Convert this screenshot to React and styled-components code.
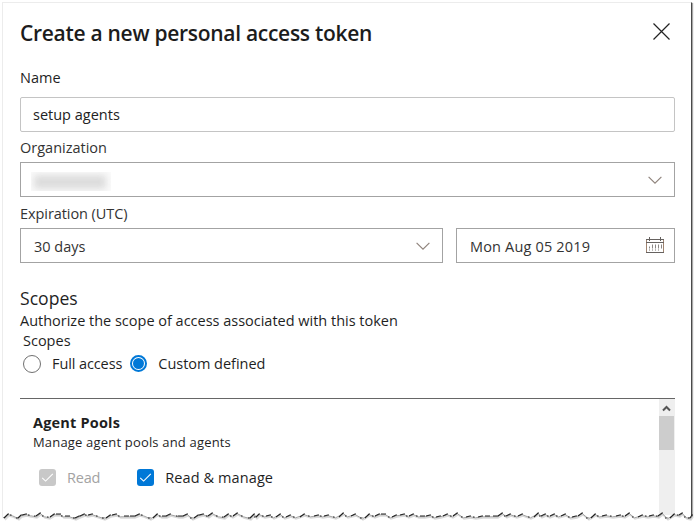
import React from 'react';
import styled, { createGlobalStyle } from 'styled-components';

const GlobalStyle = createGlobalStyle`
  * { box-sizing: border-box; }
  body {
    margin: 0;
    background: #fff;
    overflow: hidden;
    color: #1f1f1f;
    font: 14.5px "Open Sans", "Noto Sans", sans-serif;
  }
`;

const Page = styled.main`
  display: flex;
  height: 528px;
  padding: 2px 3px 11px 2px;
`;

const Panel = styled.section`
  position: relative;
  display: flex;
  flex-direction: column;
  width: 690px;
  padding: 0 16px 0 17px;
  border: solid #ececec;
  border-width: 1px 0 0 1px;
  border-right: 1px solid #4a4a4a;
  box-shadow: 1px 1px 1px #a8a8a8;
`;

const Header = styled.header`
  display: flex;
  justify-content: space-between;
  align-items: center;
  height: 61px;
  padding: 0 5px 1px 0;
`;

const Title = styled.h1`
  margin: 0;
  font-size: 21px;
  font-weight: 600;
  letter-spacing: -0.29px;
  line-height: 28px;
  color: #1c1c1c;
`;

const CloseButton = styled.button`
  display: flex;
  padding: 0 0 4px;
  border: 0;
  background: none;
`;

const Label = styled.label`
  height: ${(p) => p.$height}px;
  line-height: ${(p) => p.$line || 28}px;
  letter-spacing: ${(p) => p.$spacing || 0}px;
  color: ${(p) => p.$color || '#333'};
`;

const TextInput = styled.input`
  height: 35px;
  padding: 0 12px;
  border: 1px solid #c4c4c4;
  border-radius: 2px;
  font: inherit;
  color: #222;
  outline: none;
`;

const FieldRow = styled.div`
  display: grid;
  grid-template-columns: 423px 219px;
  gap: 13px;
`;

const PickerBox = styled.div`
  display: flex;
  justify-content: space-between;
  align-items: center;
  height: 35px;
  padding: 0 ${(p) => p.$right || 12}px 0 13px;
  border: 1px solid #a3a3a3;
  color: #333;
  letter-spacing: ${(p) => p.$spacing || 0}px;
`;

const PickerValue = styled.span`
  padding-top: 2px;
`;

const RedactedName = styled.span`
  display: flex;
  width: 80px;
  height: 19px;
  margin: 3px 0 0 -3px;
  padding: 3px 5px 2px 3px;
  overflow: hidden;
  background: #fbfbfb;

  &::before {
    content: '';
    flex: 1;
    background: #dcdcdc;
    filter: blur(3.5px);
  }
`;

const SectionTitle = styled.h2`
  margin: 23px 0 0;
  height: 24px;
  line-height: 24px;
  font-size: 17.6px;
  font-weight: 400;
`;

const Description = styled.p`
  margin: 0;
  height: 21px;
  line-height: 21px;
  letter-spacing: -0.01px;
`;

const Legend = styled.div`
  height: 20px;
  padding-left: 3px;
  line-height: 20px;
`;

const Choices = styled.div`
  display: flex;
  align-items: center;
  gap: ${(p) => p.$gap}px;
  height: ${(p) => p.$height}px;
  padding-left: ${(p) => p.$indent}px;
`;

const Choice = styled.label`
  display: flex;
  align-items: center;
  gap: ${(p) => p.$gap}px;
  letter-spacing: ${(p) => p.$spacing || 0}px;
  color: ${(p) => (p.$disabled ? '#a3a3a3' : 'inherit')};
`;

const Radio = styled.span`
  display: flex;
  align-items: center;
  justify-content: center;
  width: ${(p) => (p.$checked ? 17 : 18)}px;
  height: ${(p) => (p.$checked ? 17 : 18)}px;
  border: ${(p) => (p.$checked ? '2px solid #0078d7' : '1px solid #707070')};
  border-radius: 50%;

  &::after {
    content: '';
    width: 11px;
    height: 11px;
    border-radius: 50%;
    background: ${(p) => (p.$checked ? '#0078d7' : 'transparent')};
  }
`;

const CheckSquare = styled.span`
  display: flex;
  align-items: center;
  justify-content: center;
  width: 17px;
  height: 17px;
  border-radius: 3px;
  background: ${(p) => (p.$disabled ? '#c8c8c8' : '#0078d7')};
`;

const ScopeList = styled.div`
  display: flex;
  justify-content: space-between;
  height: 117px;
  margin-top: 22px;
  border-top: 1px solid #666;
`;

const ScopeGroup = styled.div`
  display: flex;
  flex-direction: column;
  padding: 13px 0 0 13px;
`;

const GroupTitle = styled.h3`
  margin: 0;
  height: 21px;
  line-height: 21px;
  font-size: 14.5px;
  font-weight: 700;
  letter-spacing: 0.18px;
`;

const GroupText = styled.p`
  margin: 0;
  height: 18px;
  line-height: 18px;
  font-size: 13px;
  letter-spacing: 0.18px;
`;

const ScrollTrack = styled.div`
  display: flex;
  flex-direction: column;
  width: 16px;
  background: #efefef;
`;

const ScrollArrow = styled.div`
  display: flex;
  align-items: center;
  justify-content: center;
  height: 17px;
  padding: 1px 1px 0 0;
`;

const ScrollThumb = styled.div`
  width: 15px;
  height: 34px;
  background: #cdcdcd;
`;

const TornEdge = styled.svg`
  position: absolute;
  left: -1px;
  bottom: -7px;
`;

const TORN = [
  [4, 18], [8, 14], [12, 15], [18, 18], [21, 15], [26, 14], [30, 15], [36, 16], [40, 13], [44, 16], [49, 17],
  [54, 14], [60, 14], [63, 16], [69, 16], [75, 18], [79, 16], [84, 14], [87, 15], [92, 14], [98, 16], [104, 18],
  [110, 15], [116, 14], [120, 16], [128, 16], [134, 16], [139, 14], [143, 15], [150, 18], [157, 14], [161, 16],
  [166, 16], [170, 14], [178, 16], [182, 16], [187, 14], [192, 18], [198, 15], [203, 14], [208, 16], [212, 13],
  [218, 16], [224, 17], [228, 14], [232, 16], [237, 13], [243, 16], [250, 18], [254, 14], [256, 17], [259, 14],
  [264, 16], [270, 15], [273, 17], [280, 14], [284, 17], [290, 15], [295, 17], [304, 14], [310, 16], [318, 15],
  [322, 16], [328, 15], [335, 17], [343, 13], [347, 16], [355, 14], [362, 18], [369, 14], [374, 16], [379, 14],
  [385, 14], [390, 17], [396, 15], [404, 14], [408, 16], [413, 14], [418, 16], [424, 16], [430, 15], [434, 17],
  [440, 16], [447, 14], [452, 16], [457, 13], [463, 17], [470, 16], [475, 17], [482, 16], [489, 16], [497, 16],
  [502, 13], [506, 16], [510, 14], [516, 16], [522, 14], [530, 17], [538, 13], [541, 16], [545, 14], [549, 16],
  [554, 14], [558, 16], [565, 14], [570, 17], [576, 16], [582, 13], [588, 18], [595, 14], [599, 16], [606, 15],
  [612, 16], [620, 15], [624, 16], [629, 13], [634, 17], [642, 15], [647, 16], [653, 15], [658, 16], [662, 13],
  [667, 18], [674, 14], [679, 15], [682, 13], [686, 17], [690, 18], [692, 15],
].map(([x, y]) => [x - 2, y - 6]);
const tornLine = TORN.map((p) => p.join(',')).join(' ');
const tornSlopes = TORN.slice(1)
  .map(([x, y], i) => {
    const [px, py] = TORN[i];
    return y <= py ? `M${Math.max(px, x - 4)} ${py}L${x} ${y}h1` : `M${x - 2} ${y}h1.5`;
  })
  .join('');

function Chevron() {
  return (
    <svg width="14" height="8" viewBox="0 0 14 8" fill="none" stroke="#8f837c" strokeWidth="1.15">
      <path d="M.6.8 7 7.1 13.4.8" />
    </svg>
  );
}

function Calendar() {
  return (
    <svg width="18" height="17" viewBox="0 0 18 17" fill="none" stroke="#666260">
      <path d="M.5 2v14M17.5 2v14" stroke="#a08470" />
      <path d="M0 2.5h18M0 5.5h18M0 15.5h18M3.5 0v4M14.5 0v4" />
      <path d="M6.5 7.5v4M9.5 7.5v4M12.5 7.5v4M15.5 7.5v4M3.5 9.5v2" stroke="#8c8886" />
      <path d="M3.5 12.5v1M6.5 12.5v1M9.5 12.5v1M12.5 12.5v1" stroke="#77716d" />
    </svg>
  );
}

function Check() {
  return (
    <svg width="13" height="11" viewBox="0 0 13 11" fill="none" stroke="#fff" strokeWidth="1.1">
      <path d="M1.2 5.8 4.6 9.1 11.8 1.9" />
    </svg>
  );
}

export default function App() {
  return (
    <>
      <GlobalStyle />
      <Page>
        <Panel>
          <Header>
            <Title>Create a new personal access token</Title>
            <CloseButton aria-label="Close">
              <svg width="17" height="17" viewBox="0 0 17 17" stroke="#222" strokeWidth="1.2">
                <path d="M.5.5l16 16M16.5.5l-16 16" />
              </svg>
            </CloseButton>
          </Header>
          <Label $height={33} $color="#1f1f1f">Name</Label>
          <TextInput defaultValue="setup agents" />
          <Label $height={30} $line={32}>Organization</Label>
          <PickerBox>
            <RedactedName />
            <Chevron />
          </PickerBox>
          <Label $height={31} $line={33} $spacing={-0.07}>Expiration (UTC)</Label>
          <FieldRow>
            <PickerBox>
              <PickerValue>30 days</PickerValue>
              <Chevron />
            </PickerBox>
            <PickerBox $right={10} $spacing={0.17}>
              <PickerValue>Mon Aug 05 2019</PickerValue>
              <Calendar />
            </PickerBox>
          </FieldRow>
          <SectionTitle>Scopes</SectionTitle>
          <Description>Authorize the scope of access associated with this token</Description>
          <Legend>Scopes</Legend>
          <Choices $height={25} $indent={3} $gap={8}>
            <Choice $gap={11} $spacing={-0.1}>
              <Radio />
              Full access
            </Choice>
            <Choice $gap={11} $spacing={-0.03}>
              <Radio $checked />
              Custom defined
            </Choice>
          </Choices>
          <ScopeList>
            <ScopeGroup>
              <GroupTitle>Agent Pools</GroupTitle>
              <GroupText>Manage agent pools and agents</GroupText>
              <Choices $height={52} $indent={6} $gap={37}>
                <Choice $gap={11} $disabled $spacing={-0.2}>
                  <CheckSquare $disabled><Check /></CheckSquare>
                  Read
                </Choice>
                <Choice $gap={11} $spacing={0.1}>
                  <CheckSquare><Check /></CheckSquare>
                  Read &amp; manage
                </Choice>
              </Choices>
            </ScopeGroup>
            <ScrollTrack>
              <ScrollArrow>
                <svg width="9" height="7" viewBox="0 0 9 7" fill="none" stroke="#555" strokeWidth="2">
                  <path d="M1 5.5 4.5 2 8 5.5" />
                </svg>
              </ScrollArrow>
              <ScrollThumb />
            </ScrollTrack>
          </ScopeList>
          <TornEdge width="691" height="18" viewBox="0 0 691 18" fill="none">
            <polygon points={`${tornLine} 691,18 0,18`} fill="#fff" />
            <polyline points={tornLine} stroke="#dadada" strokeWidth="1.4" transform="translate(1 2)" />
            <polyline points={tornLine} stroke="#a2a2a2" strokeWidth="1" transform="translate(.5 .8)" />
            <path d={tornSlopes} stroke="#222" strokeWidth="1.15" />
          </TornEdge>
        </Panel>
      </Page>
    </>
  );
}
